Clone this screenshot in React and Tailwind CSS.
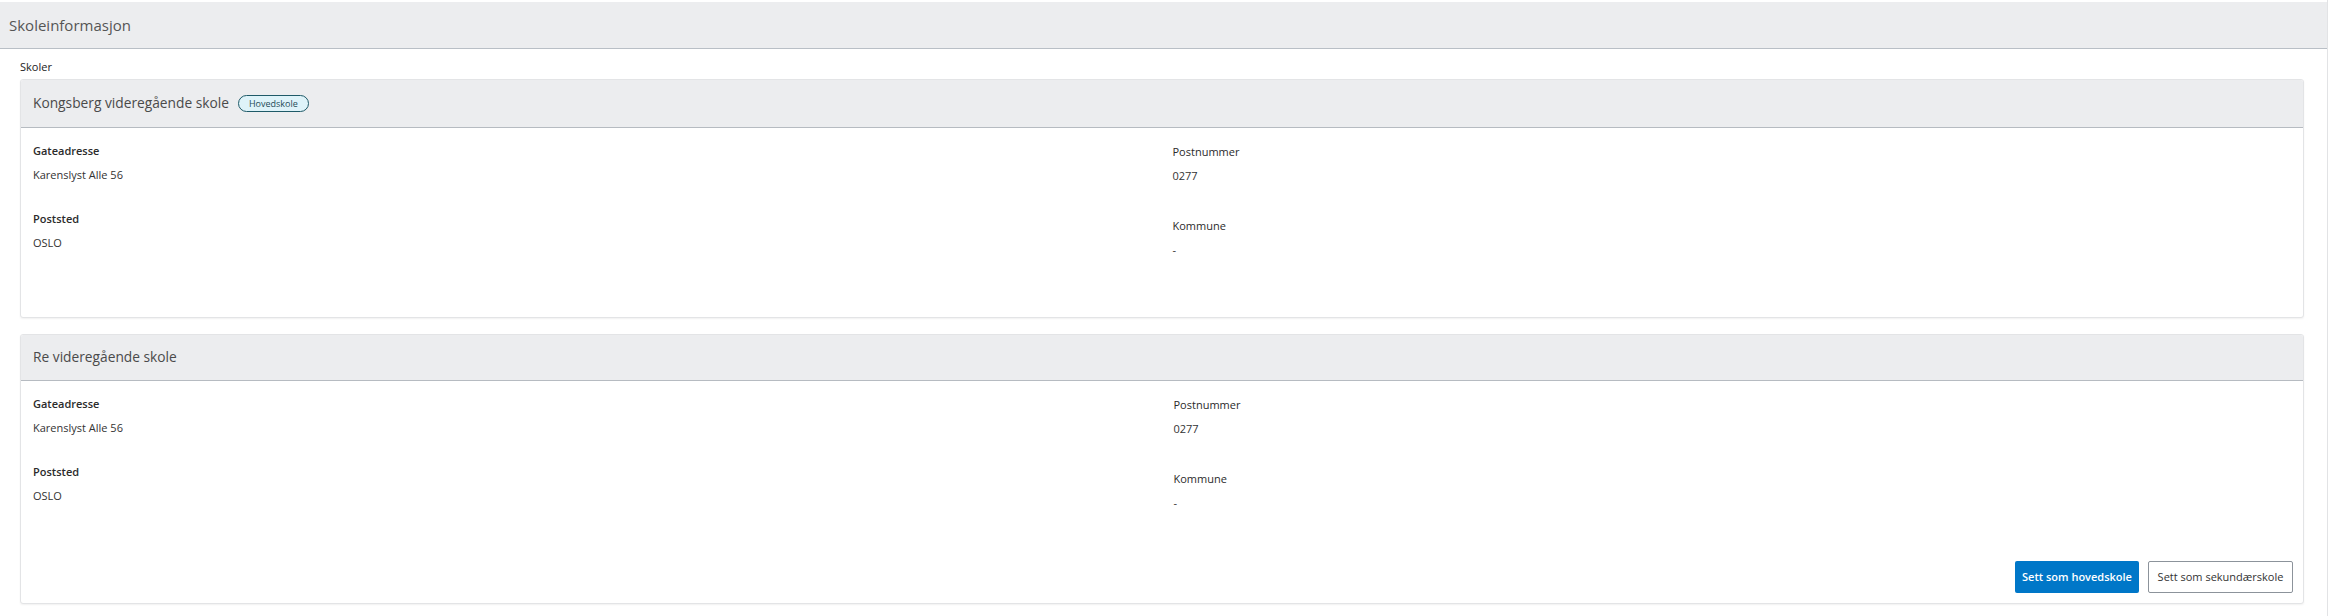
function Field({ label, value, bold, gap }) {
  return (
    <div className={gap}>
      <div className={"text-[11px] leading-[16px] text-[#2b2b2b] " + (bold ? "font-semibold" : "font-normal")}>
        {label}
      </div>
      <div className="mt-[8px] text-[11px] leading-[16px] text-[#333]">{value}</div>
    </div>
  );
}

function SchoolCard({ name, main, showActions }) {
  return (
    <div className="w-full rounded-[3px] border border-[#e3e4e6] bg-white shadow-[0_1px_2px_rgba(0,0,0,0.06)] overflow-hidden">
      {/* Header with school name and optional badge */}
      <div className={"flex items-center px-[12px] bg-[#ecedef] border-b border-[#b6bbc1] " + (main ? "h-[48px]" : "h-[46px]")}>
        <span className="text-[13.75px] text-[#4a4a4a]">{name}</span>
        {main && (
          <span className="ml-[9px] h-[17px] px-[10px] flex items-center rounded-full border border-[#1f5a68] bg-[#def3f9] text-[9px] text-[#1f4b57]">
            Hovedskole
          </span>
        )}
      </div>

      <div className={"flex flex-col px-[12px] pt-[15px] " + (showActions ? "h-[222px] pb-[10px] pr-[10px]" : "h-[189px]")}>
        <div className="grid grid-cols-2 gap-x-[21px]">
          <div>
            <Field label="Gateadresse" value="Karenslyst Alle 56" bold />
            <Field label="Poststed" value="OSLO" bold gap="mt-[28px]" />
          </div>
          <div className="pt-[1px]">
            <Field label="Postnummer" value="0277" />
            <Field label="Kommune" value="-" gap="mt-[34px]" />
          </div>
        </div>

        {showActions && (
          <div className="mt-auto flex justify-end gap-[9px]">
            <button className="h-[32px] w-[124px] rounded-[2px] bg-[#0077c8] text-[11px] font-semibold text-white">
              Sett som hovedskole
            </button>
            <button className="h-[32px] w-[145px] rounded-[2px] border border-[#8c939b] bg-white text-[11px] text-[#333]">
              Sett som sekundærskole
            </button>
          </div>
        )}
      </div>
    </div>
  );
}

export default function App() {
  return (
    <div className="w-[2328px] h-[616px] bg-white font-['Open_Sans',sans-serif] overflow-hidden">
      <div className="h-full border-r border-[#e2e3e5] pt-[2px]">
        {/* Section header */}
        <div className="h-[47px] flex items-center px-[9px] bg-[#ecedef] border-b border-[#b9bfc6] text-[15px] text-[#555]">
          Skoleinformasjon
        </div>

        <div className="pl-[20px] pr-[23px]">
          <div className="mt-[10px] mb-[4px] text-[11px] leading-[16px] text-[#222]">Skoler</div>
          <div className="flex flex-col gap-[16px]">
            <SchoolCard name="Kongsberg videregående skole" main />
            <SchoolCard name="Re videregående skole" showActions />
          </div>
        </div>
      </div>
    </div>
  );
}
